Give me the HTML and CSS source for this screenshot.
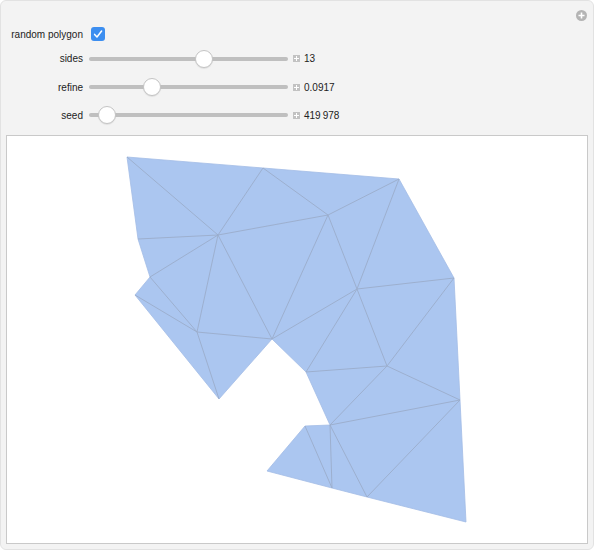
FILE: index.html
```html
<!DOCTYPE html>
<html lang="en">
<head>
  <meta charset="UTF-8">
  <title>Random Polygon Triangulation</title>
  <link rel="stylesheet" href="styles.css">
</head>
<body>
  <div class="panel">
    <span class="panel-plus">
      <svg width="11" height="11" viewBox="0 0 11 11"><circle cx="5.5" cy="5.5" r="5.5" fill="#b4b4b4"/><path d="M5.5 2.5v6M2.5 5.5h6" stroke="#fff" stroke-width="1.6"/></svg>
    </span>

    <div class="controls">
      <label class="label">random polygon</label>
      <div class="control">
        <span class="checkbox">
          <svg width="14" height="14" viewBox="0 0 14 14"><path d="M3.6 7.4l2.4 2.6 4.6-6" fill="none" stroke="#fff" stroke-width="1.5" stroke-linecap="round" stroke-linejoin="round"/></svg>
        </span>
      </div>

      <label class="label">sides</label>
      <div class="control">
        <div class="track"><span class="thumb" style="left: 57.8%"></span></div>
        <span class="step"></span>
        <span class="value">13</span>
      </div>

      <label class="label">refine</label>
      <div class="control">
        <div class="track"><span class="thumb" style="left: 31.7%"></span></div>
        <span class="step"></span>
        <span class="value">0.0917</span>
      </div>

      <label class="label">seed</label>
      <div class="control">
        <div class="track"><span class="thumb" style="left: 9.2%"></span></div>
        <span class="step"></span>
        <span class="value">419&#8201;978</span>
      </div>
    </div>

    <div class="plot">
      <svg width="580" height="407" viewBox="7 136 580 407">
        <polygon class="region" points="127,157 263,168 399,179 454,278 460,400 466,522 367,497 332,488 267,471 305,426 330,425 306,372 272,339 219,399 135,295 150,277 138,239"/>
        <path class="mesh" d="M127 157L218 235 M263 168L218 235 M218 235L138 239 M218 235L150 277
          M263 168L328 215 M328 215L218 235 M399 179L328 215 M328 215L357 289 M399 179L357 289
          M357 289L454 278 M218 235L272 339 M328 215L272 339 M218 235L197 332 M197 332L272 339
          M150 277L197 332 M135 295L197 332 M197 332L219 399 M272 339L357 289 M357 289L387 366
          M357 289L306 372 M454 278L387 366 M306 372L387 366 M387 366L330 425 M387 366L460 400
          M460 400L330 425 M460 400L367 497 M330 425L367 497 M330 425L332 488 M305 426L332 488"/>
      </svg>
    </div>
  </div>
</body>
</html>
```

FILE: styles.css
```css
* {
  margin: 0;
  padding: 0;
  box-sizing: border-box;
}

body {
  font-family: "Liberation Sans", Arial, sans-serif;
  font-size: 10px;
  color: #222;
  background: #fff;
}

.panel {
  position: relative;
  width: 594px;
  height: 550px;
  background: #f3f3f3;
  border: 1px solid #e2e2e2;
  border-radius: 6px;
  padding: 23px 5px 0 5px;
}

.panel-plus {
  position: absolute;
  top: 9px;
  right: 6px;
  line-height: 0;
}

.controls {
  display: grid;
  grid-template-columns: 76px auto;
  grid-template-rows: 20px 29px 28px 28px;
  column-gap: 6px;
  padding-left: 1px;
}

.label {
  display: flex;
  align-items: center;
  justify-content: flex-end;
}

.control {
  display: flex;
  align-items: center;
}

.checkbox {
  width: 14px;
  height: 14px;
  margin-left: 2px;
  border-radius: 3px;
  background: #3c8ef0;
  line-height: 0;
}

.track {
  position: relative;
  width: 199px;
  height: 4px;
  border-radius: 2px;
  background: #bfbfbf;
}

.thumb {
  position: absolute;
  top: 50%;
  width: 18px;
  height: 18px;
  border-radius: 50%;
  background: #fff;
  border: 1px solid #c4c4c4;
  transform: translate(-50%, -50%);
  box-shadow: 0 1px 1px rgba(0, 0, 0, 0.08);
}

.step {
  position: relative;
  width: 7px;
  height: 7px;
  margin-left: 5px;
  background: #c2c2c2;
}

.step::before,
.step::after {
  content: "";
  position: absolute;
  background: #fff;
}

.step::before {
  left: 1px;
  top: 3px;
  width: 5px;
  height: 1px;
}

.step::after {
  left: 3px;
  top: 1px;
  width: 1px;
  height: 5px;
}

.value {
  margin-left: 4px;
}

.plot {
  margin-top: 6px;
  height: 409px;
  background: #fff;
  border: 1px solid #c9c9c9;
  line-height: 0;
}

.region {
  fill: #abc6f0;
  stroke: #a3bde6;
  stroke-width: 0.8;
}

.mesh {
  fill: none;
  stroke: #9badcb;
  stroke-width: 0.9;
}
```
